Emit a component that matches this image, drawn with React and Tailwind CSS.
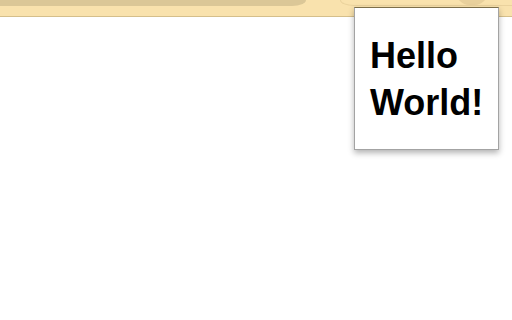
export default function App() {
  return (
    <div className="relative h-[320px] w-[512px] overflow-hidden bg-white font-['Liberation_Sans',Arial,sans-serif]">
      <div className="flex h-[17px] items-start border-b border-[#d5bf8b] bg-[#f9e2ad]">
        <div className="h-[6px] w-[306px] rounded-br-[14px_6px] bg-[#dbc797]" />
        <div className="ml-[34px] h-[6px] flex-1 rounded-bl-[14px_6px] border-b border-l border-[#ead29d]" />
      </div>

      <div className="pointer-events-none absolute left-[456px] top-[-22px] h-[27px] w-[32px] rounded-full bg-[#e8d09c]" />

      <div className="absolute left-[354px] top-[7px] h-[143px] w-[145px] border border-[#a3a3a3] border-t-[#7d6f4a] bg-white pl-[15px] pt-[24px] shadow-[0_3px_6px_rgba(0,0,0,0.3)]">
        <h1 className="text-[36px] font-bold leading-[47px] text-black">
          Hello
          <br />
          World!
        </h1>
      </div>
    </div>
  );
}
